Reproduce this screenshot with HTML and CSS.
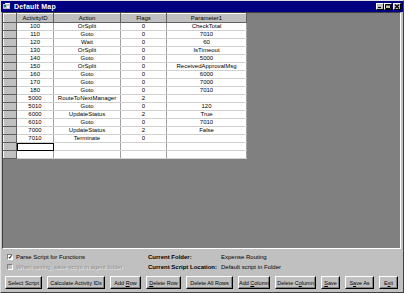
FILE: index.html
```html
<!DOCTYPE html>
<html lang="en">

<head>
    <meta charset="UTF-8">
    <title>Default Map</title>
    <link rel="stylesheet" href="styles.css">
</head>

<body>
    <div class="window">
        <div class="titlebar">
            <svg class="app-icon" width="8" height="7" viewBox="0 0 8 7">
                <rect x="0" y="1" width="7" height="5" fill="#c0c0c0" />
                <rect x="1" y="2" width="2" height="2" fill="#008080" />
                <rect x="4" y="3" width="2" height="2" fill="#ffffff" />
                <rect x="2" y="0" width="5" height="1" fill="#ffffff" />
            </svg>
            <span class="title">Default Map</span>
            <div class="title-buttons">
                <span class="tbtn">
                    <svg width="6" height="5" viewBox="0 0 6 5"><rect x="1" y="3" width="3" height="1" fill="#000" /></svg>
                </span>
                <span class="tbtn">
                    <svg width="6" height="5" viewBox="0 0 6 5"><path d="M0.5 0.5h5v4h-5z M0.5 1h5" fill="none" stroke="#000" stroke-width="1" /></svg>
                </span>
                <span class="tbtn close">
                    <svg width="6" height="5" viewBox="0 0 6 5"><path d="M1 0.5l4 4M5 0.5l-4 4" stroke="#000" stroke-width="1.2" /></svg>
                </span>
            </div>
        </div>

        <div class="canvas">
            <table class="grid">
                <thead>
                    <tr>
                        <th class="corner"></th>
                        <th class="col-id">ActivityID</th>
                        <th class="col-action">Action</th>
                        <th class="col-flags">Flags</th>
                        <th class="col-param">Parameter1</th>
                    </tr>
                </thead>
                <tbody id="gridBody"></tbody>
            </table>
        </div>

        <div class="options">
            <div class="checks">
                <div class="check"><span class="box">&#10003;</span>Parse Script for Functions</div>
                <div class="check disabled"><span class="box"></span>When saving, save script in agent folder</div>
            </div>
            <div class="info">
                <div class="info-row"><span class="info-label">Current Folder:</span><span>Expense Routing</span></div>
                <div class="info-row"><span class="info-label">Current Script Location:</span><span>Default script in Folder</span></div>
            </div>
        </div>

        <div class="buttons">
            <button class="btn w-select">Select Script</button>
            <button class="btn w-calc">Calculate Activity IDs</button>
            <button class="btn w-addrow">Add <u>R</u>ow</button>
            <button class="btn w-delrow"><u>D</u>elete Row</button>
            <button class="btn w-delall">Delete All Rows</button>
            <button class="btn w-addcol">Add <u>C</u>olumn</button>
            <button class="btn w-delcol">Delete C<u>o</u>lumn</button>
            <button class="btn w-save"><u>S</u>ave</button>
            <button class="btn w-saveas">S<u>a</u>ve As</button>
            <button class="btn w-exit">E<u>x</u>it</button>
        </div>
    </div>

    <script>
        const rows = [
            ['100', 'OrSplit', '0', 'CheckTotal'],
            ['110', 'Goto', '0', '7010'],
            ['120', 'Wait', '0', '60'],
            ['130', 'OrSplit', '0', 'IsTimeout'],
            ['140', 'Goto', '0', '5000'],
            ['150', 'OrSplit', '0', 'ReceivedApprovalMsg'],
            ['160', 'Goto', '0', '6000'],
            ['170', 'Goto', '0', '7000'],
            ['180', 'Goto', '0', '7010'],
            ['5000', 'RouteToNextManager', '2', ''],
            ['5010', 'Goto', '0', '120'],
            ['6000', 'UpdateStatus', '2', 'True'],
            ['6010', 'Goto', '0', '7010'],
            ['7000', 'UpdateStatus', '2', 'False'],
            ['7010', 'Terminate', '0', ''],
            ['', '', '', ''],
            ['', '', '', '']
        ];

        const body = document.getElementById('gridBody');
        rows.forEach((row, i) => {
            const tr = document.createElement('tr');
            tr.innerHTML = '<td class="rowhead"></td>' +
                row.map((v, j) => `<td${i === 15 && j === 0 ? ' class="focus"' : ''}>${v}</td>`).join('');
            body.appendChild(tr);
        });
    </script>
</body>

</html>
```

FILE: styles.css
```css
* {
    box-sizing: border-box;
    margin: 0;
    padding: 0;
}

body {
    font-family: 'Liberation Sans', Arial, sans-serif;
    font-size: 6px;
    color: #000;
    background: #c0c0c0;
}

.window {
    width: 404px;
    height: 293px;
    background: #c0c0c0;
    border: 1px solid;
    border-color: #dfdfdf #404040 #404040 #dfdfdf;
    display: flex;
    flex-direction: column;
}

.titlebar {
    height: 11px;
    background: #000080;
    color: #fff;
    display: flex;
    align-items: center;
    padding: 0 2px 0 2px;
}

.app-icon {
    margin-right: 3px;
}

.title {
    font-weight: bold;
    font-size: 7px;
    letter-spacing: 0.2px;
}

.title-buttons {
    margin-left: auto;
    display: flex;
}

.tbtn {
    width: 8px;
    height: 7px;
    background: #c0c0c0;
    border: 1px solid;
    border-color: #fff #000 #000 #fff;
    display: flex;
    align-items: center;
    justify-content: center;
}

.tbtn.close {
    margin-left: 1px;
}

.canvas {
    height: 237px;
    margin: 0 2px 0 1px;
    background: #808080;
    border: 1px solid;
    border-color: #404040 #fff #fff #404040;
}

.grid {
    border-collapse: collapse;
    table-layout: fixed;
    background: #fff;
    border-right: 1px solid #000;
    border-bottom: 1px solid #000;
}

.grid th {
    height: 9px;
    font-weight: normal;
    background: #c0c0c0;
    border: 1px solid;
    border-color: #fff #606060 #606060 #fff;
    text-align: center;
    line-height: 7px;
}

.grid td {
    height: 8px;
    line-height: 7px;
    text-align: center;
    color: #000;
    border-bottom: 1px solid #d0d0d0;
    border-right: 1px solid #a0a0a0;
    white-space: nowrap;
}

.grid td.rowhead {
    background: #c0c0c0;
    border: 1px solid;
    border-color: #fff #606060 #606060 #fff;
}

.grid td.focus {
    border: 1px solid #000;
    outline: 1px solid #000;
    outline-offset: -1px;
}

.corner {
    width: 13px;
}

.col-id {
    width: 37px;
}

.col-action {
    width: 67px;
}

.col-flags {
    width: 46px;
}

.col-param {
    width: 80px;
}

.options {
    display: flex;
    padding: 4px 0 0 6px;
    height: 27px;
}

.checks {
    width: 141px;
    display: flex;
    flex-direction: column;
    gap: 3px;
}

.check {
    display: flex;
    align-items: center;
    height: 7px;
}

.check .box {
    width: 6px;
    height: 6px;
    background: #fff;
    border: 1px solid;
    border-color: #808080 #fff #fff #808080;
    font-size: 6px;
    line-height: 4px;
    font-weight: bold;
    text-align: center;
    margin-right: 3px;
}

.check.disabled {
    color: #909090;
    text-shadow: 1px 1px 0 #e8e8e8;
}

.check.disabled .box {
    background: #c0c0c0;
}

.info {
    display: flex;
    flex-direction: column;
    gap: 3px;
}

.info-row {
    display: flex;
    height: 7px;
    align-items: center;
}

.info-label {
    width: 73px;
    font-weight: bold;
}

.buttons {
    display: flex;
    justify-content: space-between;
    padding: 0 5px 0 4px;
}

.btn {
    height: 13px;
    font-family: 'Liberation Sans', Arial, sans-serif;
    font-size: 5.5px;
    white-space: nowrap;
    background: #c0c0c0;
    color: #000;
    border: 1px solid;
    border-color: #fff #000 #000 #fff;
    box-shadow: inset -1px -1px 0 #808080;
    padding: 0;
}

.w-select { width: 37px; }
.w-calc { width: 58px; }
.w-addrow { width: 31px; }
.w-delrow { width: 35px; }
.w-delall { width: 47px; }
.w-addcol { width: 32px; }
.w-delcol { width: 41px; }
.w-save { width: 19px; }
.w-saveas { width: 29px; }
.w-exit { width: 19px; }
```
